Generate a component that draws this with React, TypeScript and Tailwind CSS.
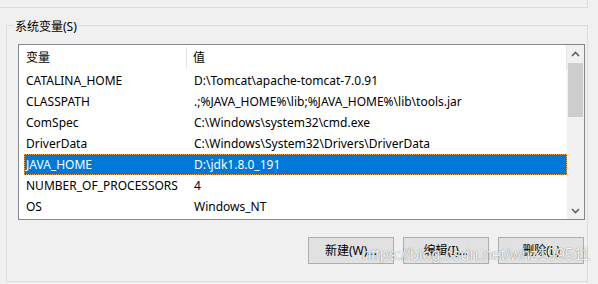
import React from "react";

const rows: [string, string][] = [
  ["CATALINA_HOME", "D:\\Tomcat\\apache-tomcat-7.0.91"],
  ["CLASSPATH", ".;%JAVA_HOME%\\lib;%JAVA_HOME%\\lib\\tools.jar"],
  ["ComSpec", "C:\\Windows\\system32\\cmd.exe"],
  ["DriverData", "C:\\Windows\\System32\\Drivers\\DriverData"],
  ["JAVA_HOME", "D:\\jdk1.8.0_191"],
  ["NUMBER_OF_PROCESSORS", "4"],
  ["OS", "Windows_NT"],
];

const font = { fontFamily: '"Noto Sans", "Noto Sans CJK SC", sans-serif' };

export default function App() {
  return (
    <div
      className="relative w-[598px] h-[284px] overflow-hidden bg-[#f0f0f0] text-[12px] text-black"
      style={font}
    >
      {/* previous group box edge */}
      <div className="h-[8px] w-[588px] border-b border-r border-[#dcdcdc]" />

      {/* system variables group */}
      <div className="relative ml-[6px] mt-[17px] w-[582px] h-[257px] border border-[#dcdcdc] pl-[11px] pt-[18px] pr-[2px]">
        <span className="absolute left-[7px] top-[-8px] bg-[#f0f0f0] px-[1px] leading-[18px]">
          系统变量(S)
        </span>

        {/* list view */}
        <div className="flex w-[567px] h-[176px] border border-[#828790] bg-white">
          <div className="flex-1 flex flex-col">
            <div className="flex h-[25px] items-center">
              <div className="w-[168px] pl-[7px] border-r border-[#e5e5e5] h-[22px] flex items-center">
                变量
              </div>
              <div className="pl-[6px] flex-1">值</div>
              <div className="w-px h-[25px] bg-[#e5e5e5]" />
            </div>
            {rows.map(([k, v]) => {
              const sel = k === "JAVA_HOME";
              return (
                <div key={k} className="flex h-[21px] pl-[5px]">
                  <div
                    className={
                      sel
                        ? "flex flex-1 items-center bg-[#0078d7] text-white outline outline-1 outline-dotted outline-offset-[-1px] outline-[#e8a048]"
                        : "flex flex-1 items-center"
                    }
                  >
                    <div className="w-[169px] pl-[2px] whitespace-nowrap">{k}</div>
                    <div className="pl-[1px] whitespace-nowrap">{v}</div>
                  </div>
                </div>
              );
            })}
          </div>

          {/* scrollbar */}
          <div className="w-[17px] bg-[#f0f0f0] flex flex-col">
            <div className="h-[18px] flex items-center justify-center">
              <svg width="9" height="6" viewBox="0 0 9 6">
                <path d="M1 5 L4.5 1.5 L8 5" stroke="#606060" strokeWidth="1.6" fill="none" />
              </svg>
            </div>
            <div className="mx-px h-[54px] bg-[#cdcdcd]" />
            <div className="flex-1" />
            <div className="h-[17px] flex items-center justify-center">
              <svg width="9" height="6" viewBox="0 0 9 6">
                <path d="M1 1 L4.5 4.5 L8 1" stroke="#606060" strokeWidth="1.6" fill="none" />
              </svg>
            </div>
          </div>
        </div>

        {/* buttons */}
        <div className="flex justify-end gap-[9px] mt-[17px] pr-[1px]">
          {["新建(W)...", "编辑(I)...", "删除(L)"].map((t) => (
            <div
              key={t}
              className="w-[86px] h-[27px] border border-[#adadad] bg-[#e1e1e1] flex items-center justify-center"
            >
              {t}
            </div>
          ))}
        </div>
      </div>

      {/* watermark */}
      <div
        className="absolute left-[362px] top-[245px] text-[16px] leading-[20px] text-[rgba(255,255,255,0.92)] [text-shadow:0_0_1px_rgba(0,0,0,0.6)] whitespace-nowrap"
        style={{ fontFamily: '"Liberation Sans", Arial, sans-serif' }}
      >
        https://blog.csdn.net/whz199511
      </div>
    </div>
  );
}
